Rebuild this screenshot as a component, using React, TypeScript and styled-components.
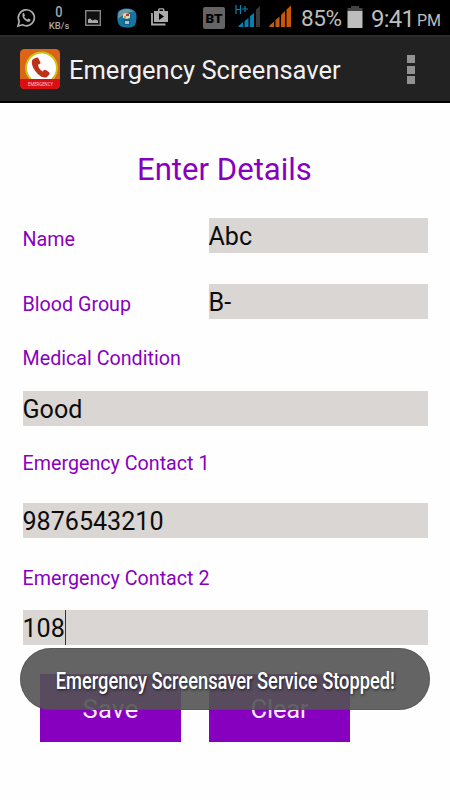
import React from "react";
import styled, { createGlobalStyle } from "styled-components";

const GlobalStyle = createGlobalStyle`
  * { box-sizing: border-box; }
  body { margin: 0; background: #fefefe; font-family: Roboto, "Liberation Sans", sans-serif; }
`;

const Screen = styled.div`
  position: relative;
  width: 450px;
  height: 800px;
  overflow: hidden;
  background: #fefefe;
`;

const StatusBar = styled.div`
  display: flex;
  align-items: flex-start;
  height: 35px;
  background: #000;
  color: #bdbdbd;
`;

const StatusItem = styled.div<{ $left: number; $top: number }>`
  flex: none;
  height: 30px;
  margin-left: ${(p) => p.$left}px;
  padding-top: ${(p) => p.$top}px;
  svg { display: block; }
`;

const Speed = styled.div`
  width: 22px;
  text-align: center;
  font-weight: 500;
  color: #a8a8a8;
`;

const SpeedValue = styled.div`
  font-size: 15px;
  line-height: 15px;
  transform: scaleX(0.85);
`;

const SpeedUnit = styled.div`
  font-size: 9.5px;
  line-height: 11px;
  white-space: nowrap;
`;

const Badge = styled.div`
  width: 22px;
  height: 22px;
  border-radius: 2px;
  background: #646464;
  color: #000;
  font-size: 13.5px;
  font-weight: 900;
  line-height: 23px;
  text-align: center;
`;

const StatusText = styled.div<{ $size: number; $width: number; $spacing?: number }>`
  width: ${(p) => p.$width}px;
  font-size: ${(p) => p.$size}px;
  line-height: 26px;
  letter-spacing: ${(p) => p.$spacing ?? 0}px;
  white-space: nowrap;
`;

const ActionBar = styled.header`
  display: flex;
  align-items: center;
  height: 68px;
  padding: 0 35px 0 20px;
  background: #222;
  border-top: 2px solid #2b2b2b;
  border-bottom: 2px solid #000;
`;

const Title = styled.h1`
  flex: 1;
  margin: 2px 0 0 9px;
  font-size: 25.5px;
  font-weight: 400;
  line-height: 34px;
  color: #f1f1f1;
  white-space: nowrap;
`;

const Overflow = styled.div`
  display: grid;
  gap: 2.5px;
  margin-top: 1px;
`;

const OverflowDot = styled.i`
  width: 8px;
  height: 8px;
  background: #929292;
`;

const Form = styled.main`
  display: flex;
  flex-direction: column;
  padding: 0 22.5px 0 22.5px;
`;

const Heading = styled.h2`
  margin: 47px 0 28px;
  height: 40px;
  padding-left: 114.5px;
  font-size: 31.1px;
  font-weight: 400;
  line-height: 40px;
  color: #8800bf;
  white-space: nowrap;
`;

const Row = styled.div<{ $gap: number }>`
  display: grid;
  grid-template-columns: 186px 1fr;
  margin-bottom: ${(p) => p.$gap}px;
`;

const Label = styled.label<{ $gap?: number; $top?: number }>`
  height: 24px;
  margin-top: ${(p) => p.$top ?? 0}px;
  margin-bottom: ${(p) => p.$gap ?? 0}px;
  font-size: 19.7px;
  line-height: 26px;
  color: #8800bf;
  white-space: nowrap;
`;

const Field = styled.div<{ $gap?: number }>`
  display: flex;
  align-items: flex-start;
  height: 35px;
  margin-bottom: ${(p) => p.$gap ?? 0}px;
  background: #dad6d3;
  color: #0c0c0c;
  font-size: 25.1px;
  line-height: 37px;
`;

const Caret = styled.i`
  width: 1px;
  height: 35px;
  background: #333;
`;

const Buttons = styled.div`
  display: flex;
  gap: 28px;
  padding-left: 17.5px;
`;

const Button = styled.button<{ $spacing: number }>`
  width: 141px;
  height: 68px;
  padding: 2px 0 0;
  border: 0;
  background: #8800bf;
  color: #f4eaf8;
  font-family: inherit;
  font-size: 25.5px;
  letter-spacing: ${(p) => p.$spacing}px;
`;

const Toast = styled.div`
  position: absolute;
  left: 20px;
  top: 648px;
  width: 410px;
  height: 62px;
  border-radius: 31px;
  background: rgba(83, 83, 83, 0.9);
  box-shadow: inset 0 0 0 1px rgba(70, 70, 70, 0.35);
  color: #fff;
  display: flex;
  align-items: center;
  justify-content: center;
`;

const ToastText = styled.span`
  font-size: 23px;
  font-weight: 500;
  line-height: 30px;
  padding-top: 5px;
  white-space: nowrap;
  text-shadow: 1px 1px 3px rgba(0, 0, 0, 0.7);
  transform: scaleX(0.795);
`;

const WhatsAppIcon = () => (
  <svg width="20" height="20" viewBox="0 0 20 20">
    <path d="M2 18l1.2-4.6A8 8 0 1 1 6.5 16.8Z" fill="none" stroke="#adadad" strokeWidth="1.7" />
    <path d="M6.7 5.4c.8-.6 1.4-.3 1.7.5l.5 1.3c.1.5-.6 1-.8 1.4.8 1.5 1.8 2.4 3.2 3 .5-.3.9-1.3 1.4-1.1l1.7.9c.5.4-.2 1.7-.8 2.1-2.8 1.5-8.8-4.2-6.9-8.1z" fill="#adadad" />
  </svg>
);

const ImageIcon = () => (
  <svg width="16" height="16" viewBox="0 0 16 16">
    <rect x=".7" y=".7" width="14.6" height="14.6" fill="#101010" stroke="#858585" strokeWidth="1.4" />
    <path d="M3 13V9.5l2-1.2 2.4 2.3L10 9.5l3 1V13z" fill="#aaa" />
  </svg>
);

const AppIcon = () => (
  <svg width="20" height="20" viewBox="0 0 20 20">
    <path d="M.5 6C1 2 4 1.500 8 .5c4-.5 9.500.5 11 4.500 1 4 .5 9-1 12-2 3.500-10 3-14 1.500C0 16 0 10 .5 6z" fill="#1674a2" />
    <path d="M1.500 5C4 1 8 .5 13 1.500l4 2-6 1-7 4-3 2z" fill="#7597a5" />
    <path d="M6 5h8l-1 12H7z" fill="#17607f" />
    <path d="M6 5.500l3-.500 4 1 0 4-3 1-4-1z" fill="#ded5b6" />
    <path d="M9 6h3v2H9z" fill="#b23d27" />
    <path d="M7 8h2v2H7z" fill="#e19b20" />
    <path d="M8 13h4v3H8z" fill="#a5c3cd" />
  </svg>
);

const StoreIcon = () => (
  <svg width="18" height="18" viewBox="0 0 18 18">
    <path d="M1 5v11.500h13.500" fill="none" stroke="#aaa" strokeWidth="1.8" />
    <path d="M3 3h4V1.500L8 .3h4.500l1 1.200V3H17v11H3z" fill="#aaa" />
    <path d="M8.500 1.500h3.400V3H8.500z" fill="#000" />
    <path d="M8 5l5 3.500L8 12z" fill="#000" />
  </svg>
);

const DataSignal = () => (
  <svg width="27" height="24" viewBox="0 0 27 24">
    <path d="M1 0v9M5.500 0v9M1 4.500h4.500M7 4h6M10 1v6" fill="none" stroke="#087fae" strokeWidth="1.200" />
    <path d="M3.500 22v-1L8 17v5zM9.500 22v-6l4-3v9zM15 22V11l4-3v14z" fill="#087fae" />
    <path d="M21 22V4.500l4-3.500v21z" fill="#383838" />
  </svg>
);

const VoiceSignal = () => (
  <svg width="23" height="22" viewBox="0 0 23 22">
    <path d="M.5 22v-1.500L5 16.500V22zM6.500 22v-7l4-3.500V22zM12 22V10l4-4v16zM17.500 22V4.500l4.500-4V22z" fill="#c75809" />
  </svg>
);

const BatteryIcon = () => (
  <svg width="16" height="23" viewBox="0 0 16 23">
    <path d="M4 0h8v2h3.500v3H.5V2H4z" fill="#444" />
    <path d="M.5 5h15v17H.5z" fill="#bdbdbd" />
  </svg>
);

const EmergencyLogo = () => (
  <svg width="40" height="40" viewBox="0 0 40 40">
    <defs>
      <clipPath id="tile"><rect width="40" height="40" rx="4.500" /></clipPath>
    </defs>
    <g clipPath="url(#tile)">
      <rect width="40" height="40" fill="#dc6417" />
      <circle cx="21.500" cy="19" r="16.500" fill="#c9c21b" />
      <circle cx="21.500" cy="19" r="14.500" fill="#fff" />
      <path d="M13 10l4-1.500q1-.2 1.500 1l2 4q.2 1-1 1.500l-1.500.8q.5 4 4.500 6.700l1.500-1.500q1-.6 2 0l3.300 2.500q.8 1 0 2l-2.500 2.700q-4 1.500-9-3.200-6-6.500-6-11.500 0-2.500 1.200-3.500z" fill="#bd3319" />
      <rect y="30" width="40" height="10" fill="#d90f12" />
    </g>
    <text x="20.500" y="37" textAnchor="middle" textLength="25" lengthAdjust="spacingAndGlyphs" fontSize="5.500" fill="#f7cccc">EMERGENCY</text>
  </svg>
);

export default function App() {
  return (
    <Screen>
      <GlobalStyle />
      <StatusBar>
        <StatusItem $left={16} $top={8}><WhatsAppIcon /></StatusItem>
        <StatusItem $left={12} $top={5}>
          <Speed>
            <SpeedValue>0</SpeedValue>
            <SpeedUnit>KB/s</SpeedUnit>
          </Speed>
        </StatusItem>
        <StatusItem $left={15} $top={10}><ImageIcon /></StatusItem>
        <StatusItem $left={16} $top={8}><AppIcon /></StatusItem>
        <StatusItem $left={14} $top={8}><StoreIcon /></StatusItem>
        <StatusItem $left={34} $top={7}><Badge>BT</Badge></StatusItem>
        <StatusItem $left={10} $top={5}><DataSignal /></StatusItem>
        <StatusItem $left={7} $top={5}><VoiceSignal /></StatusItem>
        <StatusItem $left={9} $top={6}><StatusText $size={22.6} $width={46} $spacing={-0.4}>85%</StatusText></StatusItem>
        <StatusItem $left={0} $top={6}><BatteryIcon /></StatusItem>
        <StatusItem $left={8} $top={6}><StatusText $size={24} $width={45} $spacing={-0.8}>9:41</StatusText></StatusItem>
        <StatusItem $left={1} $top={8}><StatusText $size={16} $width={24} $spacing={-0.2}>PM</StatusText></StatusItem>
      </StatusBar>
      <ActionBar>
        <EmergencyLogo />
        <Title>Emergency Screensaver</Title>
        <Overflow><OverflowDot /><OverflowDot /><OverflowDot /></Overflow>
      </ActionBar>
      <Form>
        <Heading>Enter Details</Heading>
        <Row $gap={31}>
          <Label $top={9}>Name</Label>
          <Field>Abc</Field>
        </Row>
        <Row $gap={27}>
          <Label $top={8}>Blood Group</Label>
          <Field>B-</Field>
        </Row>
        <Label $gap={21}>Medical Condition</Label>
        <Field $gap={25}>Good</Field>
        <Label $gap={28}>Emergency Contact 1</Label>
        <Field $gap={28}>9876543210</Field>
        <Label $gap={20}>Emergency Contact 2</Label>
        <Field $gap={29}>108<Caret /></Field>
        <Buttons>
          <Button $spacing={0.4}>Save</Button>
          <Button $spacing={-0.2}>Clear</Button>
        </Buttons>
      </Form>
      <Toast><ToastText>Emergency Screensaver Service Stopped!</ToastText></Toast>
    </Screen>
  );
}
